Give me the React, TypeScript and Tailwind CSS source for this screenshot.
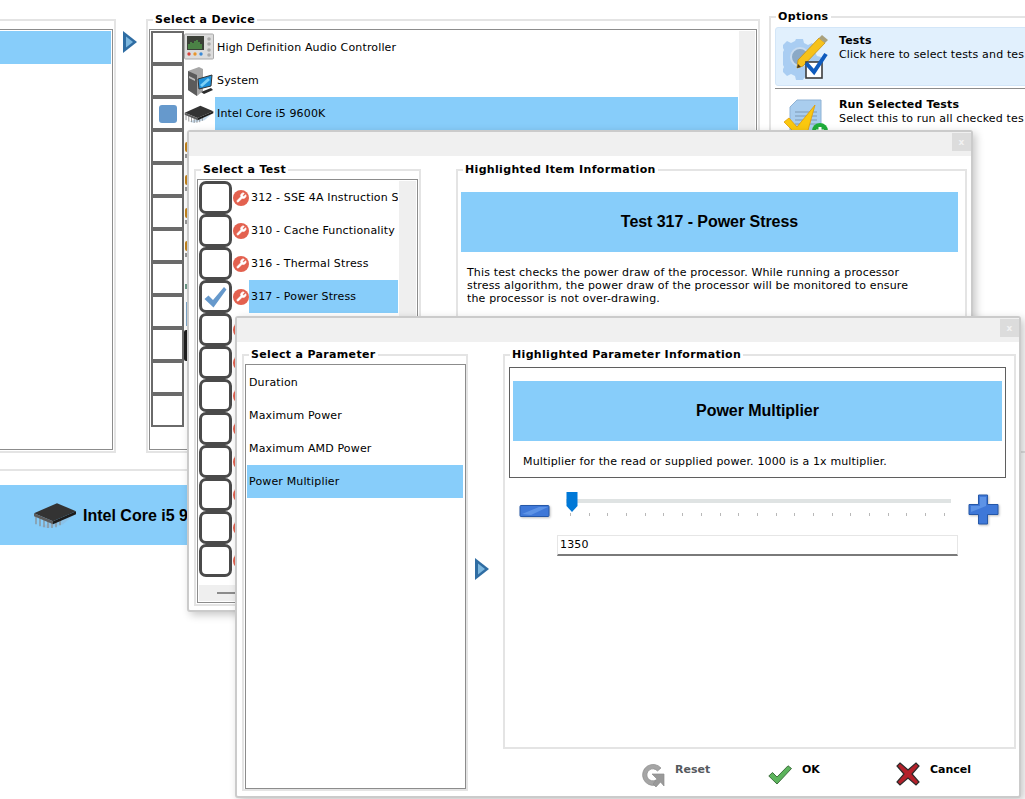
import { Wrench } from "lucide-react";
import type { ReactNode } from "react";

const FONT = "font-['DejaVu_Sans',sans-serif] text-[11px] tracking-[0.15px] text-black";

function GroupBox({ title, className, children }: { title?: string; className: string; children?: ReactNode }) {
  return (
    <div className={`relative border-2 border-[#e4e4e4] bg-white ${className}`}>
      {title && (
        <span className="absolute left-[5px] top-[-8px] bg-white px-[2px] text-[11px] leading-[13px] font-bold tracking-[0.33px]">
          {title}
        </span>
      )}
      {children}
    </div>
  );
}

function Arrow() {
  return (
    <svg width="16" height="24" viewBox="0 0 16 24" className="block">
      <path d="M1 1 L15 12 L1 23 Z" fill="#2f6da3" />
      <path d="M4 6.5 L11 12 L4 17.5 Z" fill="#7db7de" />
    </svg>
  );
}

function ChipIcon({ width = 30 }: { width?: number }) {
  return (
    <svg width={width} height={width * 0.6} viewBox="0 0 44 26" className="block">
      <path d="M8 24 L42 12 L30 22 L14 26 Z" fill="#8fb8d8" opacity="0.5" />
      <g stroke="#8a8a8a" strokeWidth="1.2">
        <path d="M3 14v8M7 15v9M11 16v9M15 17v9M19 18v8M23 18v7M27 17v6" />
      </g>
      <path d="M1 11 L24 1 L43 9 L20 19 Z" fill="#333" />
      <path d="M1 11 L20 19 L20 22 L1 14 Z" fill="#5c5c5c" />
      <path d="M20 19 L43 9 L43 12 L20 22 Z" fill="#1c1c1c" />
    </svg>
  );
}

function AudioIcon() {
  return (
    <svg width="30" height="30" viewBox="0 0 30 30" className="block">
      <rect x="0.5" y="1" width="29" height="25" rx="1" fill="#dcdcdc" stroke="#a8a8a8" />
      <rect x="3" y="3" width="17" height="14" fill="#3b4038" />
      <path d="M5 16v-5M7 16v-7M9 16v-6M11 16v-8M13 16v-9M15 16v-7M17 16v-5" stroke="#58b050" strokeWidth="1.2" />
      <circle cx="25" cy="6" r="1.8" fill="#a9a9a9" />
      <circle cx="25" cy="11" r="1.8" fill="#a9a9a9" />
      <circle cx="25" cy="17" r="1.8" fill="#a9a9a9" />
      <circle cx="25" cy="22" r="1.8" fill="#a9a9a9" />
      <circle cx="5" cy="21" r="1.7" fill="#d8403a" />
      <circle cx="11" cy="21" r="1.7" fill="#e8962c" />
      <circle cx="17" cy="21" r="1.7" fill="#3a8ad8" />
    </svg>
  );
}

function SystemIcon() {
  return (
    <svg width="30" height="30" viewBox="0 0 30 30" className="block">
      <path d="M4 5 L15 1 L19 3 L19 25 L13 30 L4 24 Z" fill="#a6a6a6" />
      <path d="M4 5 L13 9 L13 30 L4 24 Z" fill="#5b5b5b" />
      <path d="M5 10 L11 13 L11 15 L5 12 Z" fill="#bbb" />
      <path d="M14 13 L28 9 L27 20 L15 23 Z" fill="#1d8fd8" stroke="#333" />
      <path d="M16 19 L24 12 L26 14 L18 21 Z" fill="#7fd0f5" />
      <path d="M17 26 L27 22 L29 24 L20 28 Z" fill="#2b2b2b" />
    </svg>
  );
}

function SliverIcon({ index }: { index: number }) {
  if (index === 8) return <div className="ml-[2px] mt-[5px] h-[24px] w-[4px] bg-[#7fa9cc]" />;
  if (index === 9) return <div className="mt-[1px] h-[31px] w-[4px] rounded-l-[2px] bg-[#1f1f1f]" />;
  if (index === 7) return <div className="ml-[1px] mt-[16px] h-[5px] w-[3px] bg-[#6d9a88]" />;
  if (index > 9) return null;
  return (
    <div className="ml-[1px] mt-[7px] flex flex-col gap-[2px]">
      <div className="h-[10px] w-[3px] rounded-l-[2px] bg-[#c4841c]" />
      <div className="h-[4px] w-[3px] bg-[#999]" />
    </div>
  );
}

function GearIcon() {
  return (
    <svg width="46" height="46" viewBox="0 0 46 46" className="block shrink-0">
      <path
        d="M13 5 h7 l1 4 l4 2 l4-2 l5 5 l-2 4 l2 4 l4 1 v7 l-4 1 l-2 4 l2 4 l-5 5 l-4-2 l-4 2 l-1 2 h-7 l-1-4 l-4-2 l-4 2 l-5-5 l2-4 l-2-4 l-4-1 v-7 l4-1 l2-4 l-2-4 l5-5 l4 2 l4-2 Z"
        fill="#a9cdf2"
      />
      <circle cx="17" cy="23" r="9" fill="#8ba9c6" stroke="#c7dbef" strokeWidth="2" />
      <path d="M15 26 L36 4 L42 9 L20 32 L14 34 Z" fill="#f6c21c" stroke="#c9920e" strokeWidth="0.8" />
      <path d="M36 4 L39 1 L45 6 L42 9 Z" fill="#a9a17d" />
      <path d="M14 34 L15 30 L18 33 Z" fill="#4a3a20" />
      <rect x="23" y="28" width="16" height="16" fill="#fff" stroke="#3c3c3c" strokeWidth="1.6" />
      <path d="M23 29 L31 38 L43 20" fill="none" stroke="#0f5bbd" strokeWidth="4" />
    </svg>
  );
}

function RunIcon() {
  return (
    <svg width="46" height="36" viewBox="0 0 46 36" className="block shrink-0">
      <path d="M7 9 L14 2 H38 V36 H7 Z" fill="#a9cdee" stroke="#8fb2d4" />
      <path d="M12 14h22M12 18h22M12 22h22M12 26h22" stroke="#7d99b5" strokeWidth="1" />
      <path d="M1 24 L6 20 L14 29 L32 7 L24 36 H13 Z" fill="#fbc80e" stroke="#e19c08" strokeWidth="0.8" />
      <circle cx="37" cy="33" r="8" fill="#1fae3b" />
      <path d="M33 33h8M37 29v8" stroke="#fff" strokeWidth="3" />
    </svg>
  );
}

function ResetIcon() {
  return (
    <svg width="24" height="25" viewBox="0 0 24 25" className="block">
      <path
        d="M20 6 A10.5 10.5 0 1 0 15 23 L15 18 A6 6 0 1 1 16.5 9 Z"
        fill="#a5a5a5"
        stroke="#8c8c8c"
        strokeWidth="0.7"
      />
      <path d="M11 12 H23 V24 L19.5 20 L15 25 L12 22 L16 17 Z" fill="#9a9a9a" stroke="#8c8c8c" strokeWidth="0.7" />
    </svg>
  );
}

function OkIcon() {
  return (
    <svg width="24" height="20" viewBox="0 0 24 20" className="block">
      <path d="M0.8 11 L4.5 7.5 L9 12 L20 0.8 L23.5 3.5 L9 19 Z" fill="#5cb45c" stroke="#3f6f3f" strokeWidth="1" />
    </svg>
  );
}

function CancelIcon() {
  return (
    <svg width="24" height="24" viewBox="0 0 24 24" className="block">
      <path
        d="M4 1 L12 8 L20 1 L23 4 L16 12 L23 20 L20 23 L12 16 L4 23 L1 20 L8 12 L1 4 Z"
        fill="#b5202a"
        stroke="#2b2b2b"
        strokeWidth="1.2"
      />
    </svg>
  );
}

function MinusIcon() {
  return (
    <svg width="31" height="14" viewBox="0 0 31 14" className="block drop-shadow-[1px_1px_1px_rgba(0,0,0,0.25)]">
      <rect x="1" y="1.5" width="29" height="11" rx="1" fill="#3f78d8" stroke="#2658a8" />
      <path d="M3 10 L20 3 H29 L12 11 Z" fill="#5d93e6" />
    </svg>
  );
}

function PlusIcon() {
  return (
    <svg width="31" height="31" viewBox="0 0 31 31" className="block drop-shadow-[1px_1px_1px_rgba(0,0,0,0.25)]">
      <path d="M10.5 1 H19.5 V10.5 H30 V20.5 H19.5 V30 H10.5 V20.5 H1 V10.5 H10.5 Z" fill="#3f78d8" stroke="#2658a8" />
      <path d="M3 18 L18 12 V3 H12 V12 H3 Z" fill="#5d93e6" />
    </svg>
  );
}

function Window({ className, children }: { className: string; children: ReactNode }) {
  return (
    <div
      className={`absolute overflow-hidden rounded-[3px] border-2 border-[#cbcbcb] bg-white shadow-[3px_3px_8px_rgba(0,0,0,0.22)] ${className}`}
    >
      <div className="flex h-[24px] items-start justify-end bg-[#f0f0f0] pt-[1px]">
        <div className="flex h-[18px] w-[19px] items-center justify-center bg-[#dcdcdc] text-[9px] leading-none font-bold text-[#f2f2f2]">
          x
        </div>
      </div>
      {children}
    </div>
  );
}

function Banner({ children, className }: { children: ReactNode; className: string }) {
  return (
    <div
      className={`flex h-[60px] items-center justify-center bg-[#87cdfa] font-['Liberation_Sans',sans-serif] text-[16px] font-bold tracking-[-0.05px] ${className}`}
    >
      {children}
    </div>
  );
}

const testRows = ["312 - SSE 4A Instruction S", "310 - Cache Functionality", "316 - Thermal Stress", "317 - Power Stress"];
const params = ["Duration", "Maximum Power", "Maximum AMD Power", "Power Multiplier"];

export default function App() {
  return (
    <div className={`relative h-[799px] w-[1025px] overflow-hidden bg-white ${FONT}`}>
      <div className="flex items-start pt-[19px]">
        <GroupBox className="ml-[-10px] h-[434px] w-[126px] shrink-0 p-[8px_1px_1px_1px]">
          <div className="h-full border border-[#8c8c8c] p-[1px]">
            <div className="h-[33px] bg-[#87cdfa]" />
          </div>
        </GroupBox>
        <div className="ml-[6px] mt-[11px] shrink-0">
          <Arrow />
        </div>
        <GroupBox title="Select a Device" className="ml-[8px] h-[434px] w-[614px] shrink-0 p-[8px_1px_1px_1px]">
          <div className="flex h-full border border-[#8c8c8c] p-[1px]">
            <div className="flex-1">
              {Array.from({ length: 12 }).map((_, i) => (
                <div key={i} className="flex h-[33px] items-stretch">
                  <div className="flex w-[33px] shrink-0 items-center justify-center border-2 border-[#6a6a6a]">
                    {i === 2 && <div className="h-[18px] w-[18px] rounded-[3px] bg-[#6699cc]" />}
                  </div>
                  <div className="flex w-[31px] shrink-0 items-center">
                    {i === 0 && <AudioIcon />}
                    {i === 1 && <SystemIcon />}
                    {i === 2 && <ChipIcon />}
                    {i > 2 && <SliverIcon index={i} />}
                  </div>
                  {i < 3 && (
                    <div className={`flex flex-1 items-center pl-[2px] pt-[2px] ${i === 2 ? "bg-[#87cdfa]" : ""}`}>
                      {["High Definition Audio Controller", "System", "Intel Core i5 9600K"][i]}
                    </div>
                  )}
                </div>
              ))}
            </div>
            <div className="ml-[1px] w-[16px] shrink-0 bg-[#efefef]" />
          </div>
        </GroupBox>
        <GroupBox title="Options" className="ml-[9px] mt-[-3px] h-[437px] w-[280px] shrink-0 pl-[4px] pt-[9px]">
          <div className="flex h-[59px] rounded-[3px] border border-[#d3e6f8] bg-[#e1f0fd] pl-[7px] pt-[6px]">
            <GearIcon />
            <div className="ml-[10px] whitespace-nowrap leading-[14px]">
              <div className="font-bold">Tests</div>
              <div>Click here to select tests and tes</div>
            </div>
          </div>
          <div className="mt-[2px] h-px bg-[#8c8c8c]" />
          <div className="flex pl-[8px] pt-[9px]">
            <RunIcon />
            <div className="ml-[10px] whitespace-nowrap leading-[14px]">
              <div className="font-bold">Run Selected Tests</div>
              <div>Select this to run all checked tes</div>
            </div>
          </div>
        </GroupBox>
      </div>

      <div className="mt-[16px] h-[2px] w-[1000px] bg-[#e4e4e4]" />
      <div className="mt-[14px] flex h-[60px] w-[1000px] items-center bg-[#87cdfa] pl-[33px] font-['Liberation_Sans',sans-serif] text-[16px] font-bold tracking-normal">
        <ChipIcon width={44} />
        <span className="ml-[6px] pt-[2px]">Intel Core i5 9600K</span>
      </div>

      <Window className="left-[187px] top-[130px] h-[482px] w-[786px]">
        <div className="flex items-start pl-[5px] pt-[13px]">
          <GroupBox title="Select a Test" className="h-[437px] w-[227px] shrink-0 p-[8px_1px_1px_1px]">
            <div className="flex h-full flex-col border border-[#8c8c8c] p-[1px]">
              <div className="flex min-h-0 flex-1">
                <div className="flex-1">
                  {Array.from({ length: 12 }).map((_, i) => (
                    <div key={i} className="flex h-[33px] items-stretch">
                      <div className="flex w-[33px] shrink-0 items-center justify-center rounded-[7px] border-[3px] border-[#4a4a4a]">
                        {i === 3 && (
                          <svg width="23" height="22" viewBox="0 0 23 22" className="shrink-0">
                            <path d="M0.5 13 L4.5 9.5 L9 14 L20 1 L22.5 3.5 L9.5 21.5 Z" fill="#6699cc" />
                          </svg>
                        )}
                      </div>
                      <div className="ml-[1px] flex w-[16px] shrink-0 items-center justify-center">
                        <div className="flex h-[16px] w-[16px] items-center justify-center rounded-full bg-[#e3614f]">
                          <Wrench size={11} color="#fff" fill="#fff" strokeWidth={1.5} />
                        </div>
                      </div>
                      {i < 4 && (
                        <div
                          className={`flex w-[149px] items-center overflow-hidden whitespace-nowrap pl-[2px] pt-[2px] ${i === 3 ? "bg-[#87cdfa]" : ""}`}
                        >
                          {testRows[i]}
                        </div>
                      )}
                    </div>
                  ))}
                </div>
                <div className="w-[17px] shrink-0 bg-[#efefef]" />
              </div>
              <div className="mt-[9px] flex h-[16px] shrink-0 items-center bg-[#efefef] pl-[18px]">
                <div className="h-[2px] w-[60px] bg-[#8c8c8c]" />
              </div>
            </div>
          </GroupBox>
          <GroupBox title="Highlighted Item Information" className="ml-[35px] h-[437px] w-[511px] shrink-0 pl-[3px] pt-[21px]">
            <Banner className="w-[497px]">Test 317 - Power Stress</Banner>
            <p className="ml-[6px] mt-[14px] w-[450px] leading-[13px]">
              This test checks the power draw of the processor. While running a processor stress algorithm, the power draw of the processor will be monitored to ensure the processor is not over-drawing.
            </p>
          </GroupBox>
        </div>
      </Window>

      <Window className="left-[235px] top-[316px] h-[482px] w-[786px]">
        <div className="flex items-start pl-[5px] pt-[12px]">
          <GroupBox title="Select a Parameter" className="h-[437px] w-[226px] shrink-0 p-[8px_0_0_1px]">
            <div className="h-[425px] w-[221px] border border-[#8c8c8c] p-[1px]">
              {params.map((p, i) => (
                <div key={p} className={`flex h-[33px] w-[216px] items-center pl-[2px] pt-[2px] ${i === 3 ? "bg-[#87cdfa]" : ""}`}>
                  {p}
                </div>
              ))}
            </div>
          </GroupBox>
          <div className="ml-[6px] mt-[203px] shrink-0">
            <Arrow />
          </div>
          <div className="ml-[13px] w-[513px] shrink-0">
            <GroupBox title="Highlighted Parameter Information" className="h-[395px] w-[513px] p-[11px_8px_0_4px]">
              <div className="h-[111px] border border-[#5f5f5f] px-[3px] pt-[13px]">
                <Banner className="w-[489px]">Power Multiplier</Banner>
                <p className="ml-[10px] mt-[14px] leading-[13px]">
                  Multiplier for the read or supplied power. 1000 is a 1x multiplier.
                </p>
              </div>
              <div className="mt-[14px] flex items-start">
                <div className="ml-[10px] mt-[12px] shrink-0">
                  <MinusIcon />
                </div>
                <div className="relative ml-[16px] h-[29px] w-[385px] shrink-0">
                  <div className="mt-[7px] h-[4px] bg-[#dfe3e3]" />
                  <div className="mt-[10px] flex justify-between pl-[4px] pr-[6px]">
                    {Array.from({ length: 21 }).map((_, i) => (
                      <div key={i} className="h-[3px] w-px bg-[#b8b8b8]" />
                    ))}
                  </div>
                  <svg width="12" height="20" viewBox="0 0 12 20" className="absolute left-0 top-0">
                    <path d="M0.5 0 H11.5 V14 L6 20 L0.5 14 Z" fill="#0078d7" />
                  </svg>
                </div>
                <div className="ml-[17px] mt-[2px] shrink-0">
                  <PlusIcon />
                </div>
              </div>
              <div className="ml-[48px] mt-[10px] flex h-[21px] w-[401px] items-center border border-b-2 border-[#e6e6e6] border-b-[#7a7a7a] pl-[2px]">
                1350
              </div>
            </GroupBox>
            <div className="mt-[13px] flex items-start tracking-normal">
              <div className="ml-[138px] flex w-[127px] shrink-0 gap-[10px]">
                <ResetIcon />
                <span className="mt-[1px] leading-[13px] font-bold text-[#55595e]">Reset</span>
              </div>
              <div className="flex w-[128px] shrink-0 gap-[10px] pt-[3px]">
                <OkIcon />
                <span className="mt-[-2px] leading-[13px] font-bold">OK</span>
              </div>
              <div className="flex shrink-0 gap-[10px]">
                <CancelIcon />
                <span className="mt-[1px] leading-[13px] font-bold">Cancel</span>
              </div>
            </div>
          </div>
        </div>
      </Window>
    </div>
  );
}
